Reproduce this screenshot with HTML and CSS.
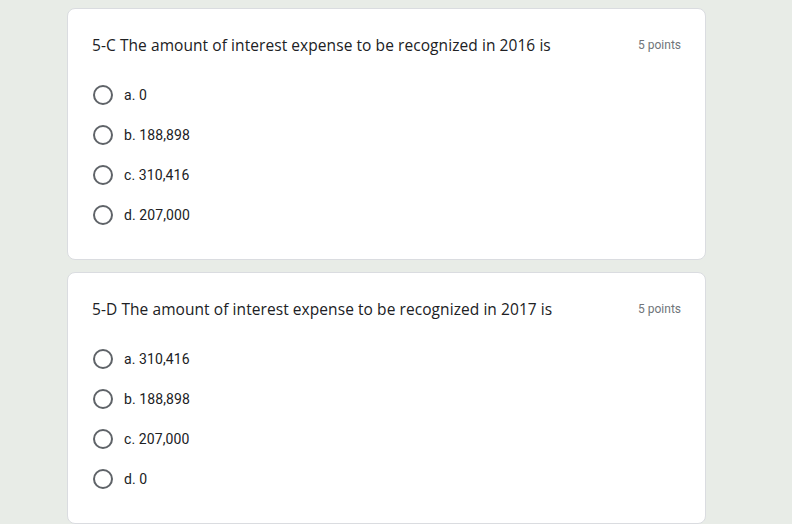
FILE: index.html
```html
<!DOCTYPE html>
<html>
<head>
<meta charset="utf-8">
<link rel="stylesheet" href="styles.css">
</head>
<body>
<div class="page">
  <div class="card">
    <div class="head">
      <div class="title">5-C The amount of interest expense to be recognized in 2016 is</div>
      <div class="points">5 points</div>
    </div>
    <div class="options">
      <div class="option"><span class="radio"></span><span class="label">a. 0</span></div>
      <div class="option"><span class="radio"></span><span class="label">b. 188,898</span></div>
      <div class="option"><span class="radio"></span><span class="label">c. 310,416</span></div>
      <div class="option"><span class="radio"></span><span class="label">d. 207,000</span></div>
    </div>
  </div>
  <div class="card">
    <div class="head">
      <div class="title">5-D The amount of interest expense to be recognized in 2017 is</div>
      <div class="points">5 points</div>
    </div>
    <div class="options">
      <div class="option"><span class="radio"></span><span class="label">a. 310,416</span></div>
      <div class="option"><span class="radio"></span><span class="label">b. 188,898</span></div>
      <div class="option"><span class="radio"></span><span class="label">c. 207,000</span></div>
      <div class="option"><span class="radio"></span><span class="label">d. 0</span></div>
    </div>
  </div>
</div>
</body>
</html>
```
FILE: styles.css
```css
html, body {
  margin: 0;
  padding: 0;
  background: #e8ece7;
}
body {
  font-family: Roboto, "Liberation Sans", sans-serif;
  color: #202124;
}
.page {
  padding: 8px 0 0 67px;
  display: flex;
  flex-direction: column;
  gap: 12px;
}
.card {
  width: 639px;
  box-sizing: border-box;
  background: #fff;
  border: 1px solid #dadce0;
  border-radius: 8px;
  padding: 24px 24px 24px 24px;
}
.head {
  display: flex;
  justify-content: space-between;
  align-items: center;
  height: 24px;
}
.title {
  font-family: "Open Sans", "Liberation Sans", sans-serif;
  font-size: 15.5px;
  letter-spacing: 0.07px;
  color: #202124;
}
.points {
  font-size: 12px;
  color: #70757a;
}
.options {
  margin-top: 18px;
  display: flex;
  flex-direction: column;
}
.option {
  height: 40px;
  display: flex;
  align-items: center;
}
.radio {
  width: 20px;
  height: 20px;
  box-sizing: border-box;
  border: 2px solid #5f6368;
  border-radius: 50%;
  margin-left: 1px;
  margin-right: 11px;
}
.label {
  font-size: 14px;
  letter-spacing: 0.1px;
  color: #202124;
}
```
